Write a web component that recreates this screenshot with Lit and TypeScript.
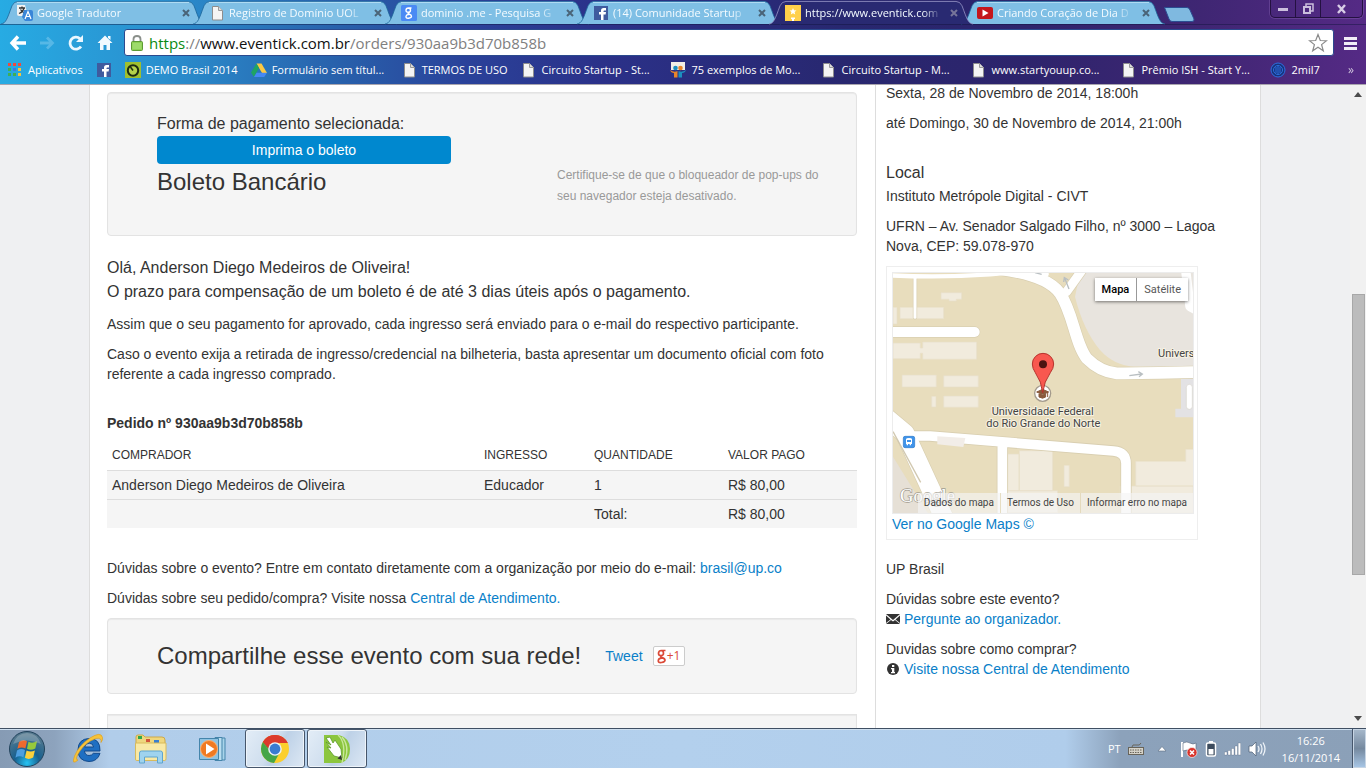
import { LitElement, html, css, svg, nothing, TemplateResult } from "lit";
import { customElement, property } from "lit/decorators.js";
import { classMap } from "lit/directives/class-map.js";

const pageIcon = svg`<path d="M3.500 1.500h6l4 4v9.500h-10z" fill="#f4f4f4" stroke="#8d8d8d"/><path d="M9.500 1.500v4h4" fill="#ddd" stroke="#9a9a9a"/>`;
const facebookIcon = svg`<rect x="1" y="1" width="14" height="14" fill="#3f5b9e"/><path d="M8 15V9.500H6V7h2V5.500Q8 3 10.500 3H13v2.400h-1.500q-1 0-1 1V7H13l-.4 2.500h-2.100V15z" fill="#fff"/>`;

const icons: Record<string, TemplateResult> = {
  page: pageIcon,
  facebook: facebookIcon,
  translate: svg`<path d="M0 0h8l3 11H2q-2 0-2-2z" fill="#f2f2f2"/><path d="M2 3h6M5 1.500V3M7 3Q6 7 2 8.500M3.500 4.500Q5 7 7.500 8" stroke="#333" stroke-width="1.300" fill="none"/><path d="M7 5h7q2 0 2 2v7q0 2-2 2H8L5 12z" fill="#3a86d8"/><path d="M8 14l3-7.500L14 14M9 11.500h4" stroke="#fff" stroke-width="1.200" fill="none"/>`,
  google: svg`<rect width="16" height="16" rx="1.500" fill="#4a8af4"/><path d="M10.500 3H7.500Q5 3 5 5.200T7.300 7.300Q9.500 7.300 9.500 5.200T7.500 3M7.300 7.500Q6.500 8.500 8 9Q10.500 9.800 10.500 11.300T7.600 13.200T5 11.400T8 9.500" fill="none" stroke="#fff" stroke-width="1.400"/>`,
  star: svg`<rect width="16" height="16" fill="#ffd04a"/><path d="M8 3l1 2.300 2.500.2-1.900 1.600.6 2.400L8 8.300 5.800 9.500l.6-2.400-1.900-1.600L7 5.300z" fill="#fff"/><path d="M6 12.500h4v1.500H9V16H7v-2H6z" fill="#fff"/>`,
  youtube: svg`<rect y="2" width="16" height="12" rx="2" fill="#c4161c"/><path d="M5.500 4.500v7l6-3.500z" fill="#fff"/>`,
  apps: svg`<g fill="#f04a3e"><path d="M1 1h3v3H1zM6 1h3v3H6zM11 1h3v3h-3z"/></g><path d="M1 6h3v3H1z" fill="#3fae55"/><path d="M6 6h3v3H6z" fill="#3b78e7"/><path d="M11 6h3v3h-3zM11 11h3v3h-3z" fill="#f7c53b"/><path d="M1 11h3v3H1zM6 11h3v3H6z" fill="#3fae55"/>`,
  demo: svg`<rect width="16" height="16" fill="#9fbf2f"/><circle cx="8" cy="8.500" r="5.200" fill="#b5d24a" stroke="#1d2b12" stroke-width="2"/><path d="M8 8.500L5.500 5" stroke="#1d2b12" stroke-width="1.500"/>`,
  drive: svg`<path d="M5.500 1.500h5L16 11h-5z" fill="#fdc942"/><path d="M5.500 1.500L8 6 3 15 0 10.500z" fill="#1fa463"/><path d="M5.500 10.700H16L13.200 15H3z" fill="#4688f4"/>`,
  slides: svg`<path d="M1 0h14v8H1z" fill="#f3eee6"/><circle cx="5.500" cy="6" r="2.300" fill="#1c8fbf"/><circle cx="10.500" cy="6" r="2.300" fill="#e8852a"/><path d="M0 8q4 3 7.500 1v6.500H4V11Q1 11 0 8z" fill="#e8852a"/><path d="M16 8q-4 3-7.500 1v6.500H12V11q3 0 4-3z" fill="#1c8fbf"/>`,
  disc: svg`<circle cx="8" cy="8" r="7" fill="#17337c" stroke="#2d6fe0"/><circle cx="8" cy="8" r="4.500" fill="none" stroke="#2d6fe0"/><path d="M6 5v6M8 4v8M10 5v6" stroke="#2d6fe0"/>`,
};

@customElement("small-icon")
export class SmallIcon extends LitElement {
  @property() name = "page";

  static styles = css`
    :host { display: block; flex: none; width: 16px; height: 16px; }
    .glyph { display: block; width: 16px; height: 16px; }
  `;

  render() {
    return html`<svg class="glyph" viewBox="0 0 16 16" aria-hidden="true">${icons[this.name]}</svg>`;
  }
}

interface Tab { icon: string; title: string; active?: boolean }
interface Bookmark { icon: string; title: string }

@customElement("browser-chrome")
export class BrowserChrome extends LitElement {
  private tabs: Tab[] = [
    { icon: "translate", title: "Google Tradutor" },
    { icon: "page", title: "Registro de Domínio UOL" },
    { icon: "google", title: "dominio .me - Pesquisa G" },
    { icon: "facebook", title: "(14) Comunidade Startup" },
    { icon: "star", title: "https://www.eventick.com", active: true },
    { icon: "youtube", title: "Criando Coração de Dia D" },
  ];

  private bookmarks: Bookmark[] = [
    { icon: "apps", title: "Aplicativos" },
    { icon: "facebook", title: "" },
    { icon: "demo", title: "DEMO Brasil 2014" },
    { icon: "drive", title: "Formulário sem títul..." },
    { icon: "page", title: "TERMOS DE USO" },
    { icon: "page", title: "Circuito Startup - St..." },
    { icon: "slides", title: "75 exemplos de Mo..." },
    { icon: "page", title: "Circuito Startup - M..." },
    { icon: "page", title: "www.startyouup.co..." },
    { icon: "page", title: "Prêmio ISH - Start Y..." },
    { icon: "disc", title: "2mil7" },
  ];

  static styles = css`
    :host {
      display: block;
      flex: none;
      border-bottom: 1px solid #a9a5ae;
      background: linear-gradient(90deg, #27abe3 0%, #2a8fce 12%, #2860ab 25%, #2a429a 34%, #2b3189 44%, #28276f 62%, #2d246c 75%, #3f2673 88%, #552a85 100%);
      color: #fff;
      font-family: "Open Sans", "Noto Sans", sans-serif;
      font-size: 12px;
      line-height: 16px;
    }
    button { padding: 0; border: 0; background: none; color: inherit; font: inherit; }
    .strip { display: flex; height: 25px; box-sizing: border-box; padding-left: 5px; border-bottom: 1px solid rgba(15, 20, 60, .45); }
    .tab { position: relative; flex: 0 1 192px; min-width: 0; display: flex; align-items: center; gap: 4px; padding: 2px 3px 0 12px; box-sizing: border-box; color: #f4fbff; }
    .tab.active { z-index: 1; }
    .shape { position: absolute; left: -5px; top: 0; width: calc(100% + 14px); height: 25px; }
    .tab small-icon, .title, .close { position: relative; }
    .title { flex: 1; min-width: 0; overflow: hidden; white-space: nowrap; font-size: 11px; mask-image: linear-gradient(90deg, #000 86%, transparent 100%); }
    .close { width: 16px; height: 16px; display: grid; place-items: center; }
    .newtab { width: 34px; height: 24px; margin-left: 6px; }
    .newtab svg { display: block; }
    .window { display: flex; align-self: flex-start; margin-left: auto; margin-right: 3px; height: 17px; border: 1px solid #241141; border-top: 0; border-radius: 0 0 5px 5px; box-shadow: 0 0 0 1px rgba(170, 130, 210, .25); }
    .window button { width: 25px; display: grid; place-items: center; border-right: 1px solid #241141; }
    .window button:last-child { width: 41px; border-right: 0; }
    .toolbar { display: flex; align-items: center; height: 33px; gap: 9px; padding: 2px 8px 0; box-sizing: border-box; }
    .nav { width: 20px; height: 20px; display: grid; place-items: center; }
    .nav svg { display: block; }
    .omni { flex: 1; display: flex; align-items: center; gap: 5px; height: 27px; box-sizing: border-box; padding: 0 5px; background: #fff; border: 1px solid #2b4a8e; border-radius: 3px; }
    .address { position: relative; flex: 1; height: 22px; }
    .url { position: absolute; inset: 0; color: #808080; font-size: 15px; line-height: 22px; white-space: nowrap; pointer-events: none; }
    .secure { color: #0a8a12; }
    .host { color: #111; }
    .field { width: 100%; height: 22px; box-sizing: border-box; padding: 0; border: 0; outline: 0; background: none; font: inherit; font-size: 15px; }
    .menu svg { display: block; }
    .marks { display: flex; align-items: center; gap: 13px; height: 26px; padding: 0 12px 2px 7px; box-sizing: border-box; }
    .mark { display: flex; align-items: center; gap: 5px; color: #fff; text-decoration: none; white-space: nowrap; font-size: 11px; }
    .mark.long { flex: 0 1 137px; }
    .more { margin-left: auto; opacity: .7; }
  `;

  private renderTab(tab: Tab) {
    return html`
      <div class=${classMap({ tab: true, active: !!tab.active })} role="tab" aria-selected=${tab.active ? "true" : "false"}>
        <svg class="shape" viewBox="0 0 206 26" preserveAspectRatio="none" aria-hidden="true">
          <path d="M1 25C6 24 7 20 12 6Q14 1.500 18 1.500H188Q192 1.500 194 6C199 20 200 24 205 25"
            fill=${tab.active ? "#292a72" : "#7fbfe5"} stroke=${tab.active ? "#9a98c8" : "#1b6398"} stroke-opacity=".8"/>
          ${tab.active ? nothing : svg`<path d="M17 2.500H189" stroke="#b6def4"/>`}
        </svg>
        <small-icon name=${tab.icon}></small-icon>
        <span class="title">${tab.title}</span>
        <button class="close" aria-label="Fechar guia">
          <svg width="8" height="8" viewBox="0 0 8 8"><path d="M1 1l6 6M7 1L1 7" stroke=${tab.active ? "#77759a" : "#4a6478"} stroke-width="2"/></svg>
        </button>
      </div>`;
  }

  render() {
    return html`
      <div class="strip" role="tablist">
        ${this.tabs.map((tab) => this.renderTab(tab))}
        <button class="newtab" aria-label="Nova guia">
          <svg width="32" height="22" viewBox="0 0 32 22"><path d="M1.500 6.500H24Q26 6.500 27 9L31 18Q31.500 20.500 29 20.500H9Q7 20.500 6 18z" fill="#7fb9e0" stroke="#2b4d92"/></svg>
        </button>
        <div class="window">
          <button aria-label="Minimizar"><svg width="12" height="10" viewBox="0 0 12 10"><rect x="1" y="4" width="10" height="3" fill="#cbbfdd"/></svg></button>
          <button aria-label="Restaurar"><svg width="12" height="12" viewBox="0 0 12 12"><path d="M4 3V1h7v7H9" fill="none" stroke="#cbbfdd" stroke-width="1.500"/><rect x="2" y="4" width="6" height="6" fill="none" stroke="#cbbfdd" stroke-width="2"/></svg></button>
          <button aria-label="Fechar"><svg width="11" height="10" viewBox="0 0 11 10"><path d="M2 1l7 8M9 1L2 9" stroke="#d8cde6" stroke-width="2.400"/></svg></button>
        </div>
      </div>
      <div class="toolbar">
        <button class="nav" aria-label="Voltar"><svg width="18" height="16" viewBox="0 0 18 16"><path d="M9 1.500L3 8l6 6.500M3.500 8H17" fill="none" stroke="#fff" stroke-width="3.400"/></svg></button>
        <button class="nav" aria-label="Avançar"><svg width="18" height="16" viewBox="0 0 18 16"><path d="M9 2.500L14.500 8 9 13.500M14 8H2" fill="none" stroke="#69c0ea" stroke-width="2.800" opacity=".7"/></svg></button>
        <button class="nav" aria-label="Recarregar"><svg width="18" height="18" viewBox="0 0 18 18"><path d="M14 12.500A6 6 0 1 1 13 4.700" fill="none" stroke="#eaf7ff" stroke-width="2.800"/><path d="M16 1v7H9z" fill="#eaf7ff"/></svg></button>
        <button class="nav" aria-label="Página inicial"><svg width="18" height="18" viewBox="0 0 18 18"><path d="M9 1.500L16.500 9H14v7h-3.500v-5h-3v5H4V9H1.500z" fill="#f2faff"/><path d="M12 2h2.500v4L12 4z" fill="#f2faff"/></svg></button>
        <div class="omni">
          <svg width="14" height="18" viewBox="0 0 14 18" aria-hidden="true"><path d="M3.500 8V5q0-3 3.500-3t3.500 3v3" fill="none" stroke="#8a8f8a" stroke-width="1.800"/><rect x="1.500" y="7.500" width="11" height="9" rx="1" fill="#8bcf52" stroke="#5d9a35"/><path d="M2.500 10h9M2.500 12h9M2.500 14h9" stroke="#b0e583"/></svg>
          <div class="address">
            <span class="url"><span class="secure">https</span>://<span class="host">www.eventick.com.br</span>/orders/930aa9b3d70b858b</span>
            <input class="field" aria-label="Endereço" />
          </div>
          <svg width="20" height="20" viewBox="0 0 20 20" aria-hidden="true"><path d="M10 1.500l2.300 6 6.200.2-4.900 3.900 1.700 6.200L10 14.200l-5.300 3.600 1.700-6.200L1.500 7.700l6.200-.2z" fill="#fff" stroke="#8a8a8a" stroke-width="1.200"/></svg>
        </div>
        <button class="menu" aria-label="Menu"><svg width="15" height="16" viewBox="0 0 15 16"><path d="M1 3.500h13M1 8.500h13M1 13.500h13" stroke="#f1edf7" stroke-width="3.200"/></svg></button>
      </div>
      <nav class="marks">
        ${this.bookmarks.map((mark) => html`<a class=${classMap({ mark: true, long: mark.title.endsWith("...") })} href="#" aria-label=${mark.title || "Facebook"}><small-icon name=${mark.icon}></small-icon>${mark.title ? html`<span>${mark.title}</span>` : nothing}</a>`)}
        <button class="more" aria-label="Mais favoritos">»</button>
      </nav>`;
  }
}

@customElement("event-map")
export class EventMap extends LitElement {
  static styles = css`
    :host { display: block; position: relative; border: 1px solid #ececec; overflow: hidden; font-family: Roboto, sans-serif; }
    .canvas { display: block; width: 100%; }
    .types { position: absolute; top: 5px; right: 5px; display: flex; background: #fff; box-shadow: 0 1px 3px rgba(0, 0, 0, .5); }
    .types button { height: 23px; padding: 0 7px; border: 0; background: #fff; color: #565656; font: 11px/23px Roboto, sans-serif; }
    .types .on { border-right: 1px solid #999; color: #000; font-weight: 500; }
    .legal { position: absolute; right: 0; bottom: 0; display: flex; height: 20px; background: rgba(245, 245, 245, .65); }
    .legal a { padding: 0 6px; border-left: 1px solid rgba(225, 214, 180, .8); color: #444; font-size: 10px; line-height: 20px; text-decoration: none; white-space: nowrap; }
    .legal a:first-child { border-left: 0; }
    .place { fill: #444; stroke: #f7f2e2; stroke-width: 6px; paint-order: stroke; font: 33px Roboto, sans-serif; }
    .brand { fill: #fff; stroke: #a29d90; stroke-width: 4px; paint-order: stroke; font: 56px "Liberation Serif", serif; }
  `;

  render() {
    return html`
      <svg class="canvas" viewBox="39 39 900 720" role="img" aria-label="Mapa do local">
        <rect x="39" y="39" width="900" height="720" fill="#e8ddbd"/>
        <path d="M600 39H939V320H760Q700 315 660 270Q610 210 585 110z" fill="#e8e4de"/>
        <g fill="#f1ebdd" stroke="#e9e0c8" stroke-width="2">
          <path d="M183 98h62v20h-16v5h-22v-5h-24zM60 142h131v34H60zM39 142h12v50H39zM39 249h82v15h7v-18h162v52H128v-18h-7v16H39zM66 345h103v36H66zM191 347h104v34H191zM155 409h13v32h-13zM191 408h104v34H191zM418 572h100v120H418zM383 582h34v110h-34zM552 616h16v64h-16zM767 604h150v-36h24v110H767zM720 678h220v81H720zM383 692h150v66H383z"/>
        </g>
        <path d="M903 352h38v120h-55v-26h17z" fill="#e3e2e4"/>
        <rect x="919" y="373" width="18" height="75" rx="9" fill="#fff" stroke="#d8d4cc" stroke-width="2"/>
        <path d="M39 590L150 770H39z" fill="#e6e0d6"/>
        <g fill="none" stroke="#d9cfb1" stroke-linecap="round" stroke-linejoin="round">
          <path d="M20 216H284" stroke-width="34"/>
          <path d="M105 55V172" stroke-width="13"/>
          <path d="M100 528H150L320 542L700 573Q738 576 738 610V780M367 550V780" stroke-width="34"/>
          <path d="M15 470L75 520L195 780" stroke-width="60"/>
          <path d="M360 28Q500 45 540 100C580 160 585 250 620 295Q660 335 710 340Q800 340 960 336" stroke-width="39"/>
          <path d="M560 95L610 25" stroke-width="31"/>
        </g>
        <g fill="none" stroke="#fff" stroke-linecap="round" stroke-linejoin="round">
          <path d="M20 216H284" stroke-width="30"/>
          <path d="M105 55V172" stroke-width="9"/>
          <path d="M100 528H150L320 542L700 573Q738 576 738 610V780M367 550V780" stroke-width="29"/>
          <path d="M15 470L75 520L195 780" stroke-width="56"/>
          <path d="M360 28Q500 45 540 100C580 160 585 250 620 295Q660 335 710 340Q800 340 960 336" stroke-width="35"/>
          <path d="M560 95L610 25" stroke-width="27"/>
          <path d="M30 46Q180 54 330 43Q420 33 500 43" stroke-width="13"/>
          <path d="M917 30L930 140L950 150" stroke-width="28"/>
        </g>
        <path d="M39 515L122 667" stroke="#d1c8b0" stroke-width="4"/>
        <path d="M172 529L256 534L250 561L172 553z" fill="#f2ede8"/>
        <g fill="none" stroke="#b9bfc2" stroke-width="4">
          <path d="M748 347L785 342M775 335l12 7-10 8" /><path d="M567 87L554 54M551 66l2-13 12 7"/><path d="M465 38l20 5"/>
        </g>
        <rect x="70" y="529" width="34" height="34" rx="5" fill="#3f93ea" stroke="#2b78c8" stroke-width="2"/>
        <path d="M78 552V538q0-4 9-4t9 4v14h-3v4h-4v-4h-5v4h-4v-4z" fill="#fff"/><path d="M81 540h12v6H81z" fill="#3f93ea"/>
        <circle cx="488" cy="400" r="24" fill="#fff" stroke="#a39a8c" stroke-width="4"/>
        <path d="M470 396l18-8 18 8-18 8zM477 402v9q11 7 20 0v-9M503 397v14" fill="#8a5a3c" stroke="#8a5a3c" stroke-width="3"/>
        <path d="M488 398Q485 365 466 338Q457 325 457 312A32 32 0 0 1 521 312Q521 325 511 338Q492 365 488 398z" fill="#f8584f" stroke="#b7322c" stroke-width="3"/>
        <circle cx="489" cy="313" r="12" fill="#4d1411"/>
        <text class="place" x="488" y="465" text-anchor="middle">Universidade Federal</text>
        <text class="place" x="490" y="501" text-anchor="middle">do Rio Grande do Norte</text>
        <text class="place" x="834" y="291">Univers</text>
        <text class="brand" x="60" y="727">Google</text>
      </svg>
      <div class="types"><button class="on">Mapa</button><button>Satélite</button></div>
      <div class="legal"><a href="#">Dados do mapa</a><a href="#">Termos de Uso</a><a href="#">Informar erro no mapa</a></div>`;
  }
}

@customElement("order-page")
export class OrderPage extends LitElement {
  static styles = css`
    :host { display: flex; flex: 1; min-height: 0; overflow: hidden; background: #eff0f2; color: #333; font: 14px/20px "Liberation Sans", Arial, sans-serif; }
    .viewport { flex: 1; min-width: 0; overflow: hidden; display: flex; justify-content: center; align-items: flex-start; }
    .sheet { display: flex; width: 100%; max-width: 1172px; box-sizing: border-box; min-height: 100%; margin-top: -2px; background: #fff; border: solid #ddd; border-width: 0 1px; }
    .main { flex: 1; min-width: 0; padding: 9px 18px 0 17px; }
    .side { flex: 0 0 385px; box-sizing: border-box; padding: 0 37px 60px 10px; border-left: 1px solid #ddd; }
    p { margin: 0 0 10px; }
    a { color: #0a7fc9; text-decoration: none; }
    .well { box-sizing: border-box; padding: 19px 30px 19px 49px; background: #f5f5f5; border: 1px solid #e3e3e3; border-radius: 4px; box-shadow: inset 0 1px 1px rgba(0, 0, 0, .05); }
    .pay { display: grid; grid-template-columns: 294px minmax(0, 270px); column-gap: 106px; min-height: 144px; margin-bottom: 20px; }
    .lead { margin: 0; font-size: 16px; line-height: 24px; font-weight: 400; }
    .print { display: block; width: 100%; height: 28px; padding: 0; border: 0; border-radius: 4px; background: #0088cf; color: #fff; font: 14px/28px "Liberation Sans", Arial, sans-serif; }
    .big { margin: 0; font-size: 24px; line-height: 36px; font-weight: 400; }
    .hint { align-self: start; margin: 53px 0 0; color: #999; font-size: 12px; line-height: 21px; }
    .greet { margin-bottom: 10px; }
    .order { margin: 29px 0 8px; font-size: 14px; line-height: 20px; font-weight: 700; }
    table { width: 100%; margin-bottom: 30px; border-collapse: collapse; table-layout: fixed; }
    th, td { box-sizing: border-box; padding: 4px 5px; text-align: left; font-weight: 400; }
    th { padding-bottom: 5px; font-size: 12px; text-transform: uppercase; }
    td { border-top: 1px solid #ddd; background: #f5f5f5; }
    .buyer { width: 372px; }
    .kind { width: 110px; }
    .share { display: flex; align-items: center; gap: 10px; height: 76px; margin-bottom: 20px; }
    .share .big { margin-right: 14px; }
    .plus { width: 32px; height: 20px; padding: 0; display: flex; align-items: center; justify-content: center; border: 1px solid #ccc; border-radius: 2px; background: #fff; color: #db4a37; font: 12px/18px "Open Sans", sans-serif; }
    .plus svg { display: block; }
    .next { height: 80px; border-radius: 0; }
    .local { margin: 30px 0 3px; font-size: 16px; line-height: 20px; font-weight: 400; }
    .mapbox { width: 312px; height: 274px; box-sizing: border-box; margin-bottom: 19px; padding: 5px 3px 5px 5px; border: 1px solid #eee; }
    .mark { display: inline-block; width: 14px; height: 14px; margin-right: 4px; vertical-align: -2px; }
    .bar { flex: 0 0 16px; display: flex; flex-direction: column; align-items: center; gap: 6px; padding: 7px 0; box-sizing: border-box; background: #f1f1f1; }
    .bar svg { flex: none; display: block; }
    .track { flex: 1; width: 13px; display: flex; flex-direction: column; }
    .before { flex: 192; }
    .thumb { flex: 281; box-sizing: border-box; border: 1px solid #a8a8a8; background: #bcbcbc; }
    .after { flex: 136; }
  `;

  render() {
    return html`
      <div class="viewport">
        <div class="sheet">
          <main class="main">
            <section class="well pay">
              <div>
                <p class="lead">Forma de pagamento selecionada:</p>
                <button class="print">Imprima o boleto</button>
                <h3 class="big">Boleto Bancário</h3>
              </div>
              <p class="hint">Certifique-se de que o bloqueador de pop-ups do seu navegador esteja desativado.</p>
            </section>
            <div class="greet">
              <p class="lead">Olá, Anderson Diego Medeiros de Oliveira!</p>
              <p class="lead">O prazo para compensação de um boleto é de até 3 dias úteis após o pagamento.</p>
            </div>
            <p>Assim que o seu pagamento for aprovado, cada ingresso será enviado para o e-mail do respectivo participante.</p>
            <p>Caso o evento exija a retirada de ingresso/credencial na bilheteria, basta apresentar um documento oficial com foto referente a cada ingresso comprado.</p>
            <h4 class="order">Pedido nº 930aa9b3d70b858b</h4>
            <table>
              <thead><tr><th class="buyer">Comprador</th><th class="kind">Ingresso</th><th>Quantidade</th><th>Valor pago</th></tr></thead>
              <tbody>
                <tr><td>Anderson Diego Medeiros de Oliveira</td><td>Educador</td><td>1</td><td>R$ 80,00</td></tr>
                <tr><td></td><td></td><td>Total:</td><td>R$ 80,00</td></tr>
              </tbody>
            </table>
            <p>Dúvidas sobre o evento? Entre em contato diretamente com a organização por meio do e-mail: <a href="#">brasil@up.co</a></p>
            <p>Dúvidas sobre seu pedido/compra? Visite nossa <a href="#">Central de Atendimento.</a></p>
            <section class="well share">
              <h3 class="big">Compartilhe esse evento com sua rede!</h3>
              <a href="#">Tweet</a>
              <button class="plus" aria-label="Google +1">
                <svg width="10" height="15" viewBox="0 0 10 15" aria-hidden="true"><path d="M8.500 1.500H4.500Q1.500 1.800 1.500 4.200T4 6.600Q6.500 6.600 6.500 4.200T4.300 1.500M4 6.800Q3.200 7.800 4.600 8.400Q8 9.600 8 11.300T4.500 13.500T1.300 11.500T5 9.200" fill="none" stroke="#db4a37" stroke-width="1.700"/></svg>+1
              </button>
            </section>
            <section class="well next"></section>
          </main>
          <aside class="side">
            <p>Sexta, 28 de Novembro de 2014, 18:00h</p>
            <p>até Domingo, 30 de Novembro de 2014, 21:00h</p>
            <h4 class="local">Local</h4>
            <p>Instituto Metrópole Digital - CIVT</p>
            <p>UFRN – Av. Senador Salgado Filho, nº 3000 – Lagoa Nova, CEP: 59.078-970</p>
            <div class="mapbox">
              <event-map></event-map>
              <a href="#">Ver no Google Maps ©</a>
            </div>
            <p>UP Brasil</p>
            <p>Dúvidas sobre este evento?<br />
              <svg class="mark" viewBox="0 0 14 14" aria-hidden="true"><path d="M0 2h14L7 8zM0 3.500L4.500 7.500 0 11zM14 3.500L9.500 7.500 14 11zM0 12l5-4 2 1.500L9 8l5 4z" fill="#333"/></svg><a href="#">Pergunte ao organizador.</a></p>
            <p>Duvidas sobre como comprar?<br />
              <svg class="mark" viewBox="0 0 14 14" aria-hidden="true"><circle cx="7" cy="7" r="6" fill="#333"/><path d="M6 3h2.300v2H6zM5 6h3.300v4H9v1.200H5V10h1V7.200H5z" fill="#fff"/></svg><a href="#">Visite nossa Central de Atendimento</a></p>
          </aside>
        </div>
      </div>
      <div class="bar" aria-hidden="true">
        <svg width="8" height="5" viewBox="0 0 8 5"><path d="M4 0L8 5H0z" fill="#4c4c4c"/></svg>
        <div class="track"><div class="before"></div><div class="thumb"></div><div class="after"></div></div>
        <svg width="8" height="5" viewBox="0 0 8 5"><path d="M4 5L8 0H0z" fill="#4c4c4c"/></svg>
      </div>`;
  }
}

@customElement("task-bar")
export class TaskBar extends LitElement {
  static styles = css`
    :host { display: flex; flex: none; height: 40px; box-sizing: border-box; border-top: 1px solid #3f4f63; box-shadow: inset 0 1px 0 #cfe0f0; background: linear-gradient(90deg, #869bb4 0%, #8da3bd 4%, #b1cdea 8%, #b3d0ed 50%, #b0cdeb 78%, #8ca2bb 82%, #8ba0b8 100%); color: #fff; font: 12px/17px "Open Sans", sans-serif; }
    button { padding: 0; border: 0; background: none; color: inherit; font: inherit; }
    .apps { display: flex; align-items: center; }
    .app { width: 60px; height: 39px; margin-right: 2px; display: grid; place-items: center; box-sizing: border-box; }
    .start { width: 54px; height: 39px; display: grid; place-items: center; margin-right: 5px; }
    .app svg, .start svg { display: block; }
    .app.open { border: 1px solid #46566b; border-radius: 3px; background: linear-gradient(120deg, #e3edf7, #cfdeee 45%, #bdd1e7 55%, #dde8f4); box-shadow: inset 0 0 0 1px #eef4fa; }
    .tray { display: flex; align-items: center; gap: 7px; margin-left: auto; }
    .tray svg { display: block; }
    .lang { font-size: 11px; }
    .clock { margin: 0 5px 0 9px; text-align: center; font-size: 11px; }
    .desk { align-self: stretch; width: 14px; box-sizing: border-box; border: 1px solid #46566b; border-width: 0 0 0 1px; box-shadow: inset 0 0 0 1px #c7d5e4; background: linear-gradient(#a7b9cc, #75899f 50%, #a9c8e8); }
  `;

  render() {
    return html`
      <div class="apps">
        <button class="start" aria-label="Iniciar">
          <svg width="38" height="38" viewBox="0 0 38 38">
            <defs><radialGradient id="orb" cx=".5" cy=".9" r=".8"><stop offset="0" stop-color="#25c3f3"/><stop offset=".45" stop-color="#17608f"/><stop offset="1" stop-color="#53788e"/></radialGradient></defs>
            <circle cx="19" cy="19" r="17.500" fill="url(#orb)" stroke="#22435c"/>
            <path d="M11 12q4-3 8-.8l-1.600 7.200q-4-2-8 .4z" fill="#ee6a2e"/><path d="M20.500 11.800q4 2 8.500-.6l-1.700 7.300q-4.400 2.200-8.300.3z" fill="#96c93c"/>
            <path d="M9 20.500q4-2.500 8-.5l-1.600 7.200q-4-2-8 .5z" fill="#4d9fe0"/><path d="M18.600 20.500q4 2.100 8.300 0l-1.700 7q-4.500 2.600-8.300.3z" fill="#fbd03c"/>
            <path d="M5 14Q9 3 19 3t14 11Q19 7 5 14z" fill="#fff" opacity=".22"/>
          </svg>
        </button>
        <button class="app" aria-label="Internet Explorer">
          <svg width="34" height="32" viewBox="0 0 34 32"><path d="M28 18H12.500q.4 4.500 4.600 4.500 3 0 4.200-2.200H28Q25.500 28.500 17 28.500 6 28 6 17T17 5.500Q28.500 5.500 28 18zM12.600 14h9q-.5-3.800-4.400-3.800T12.600 14z" fill="#1f6fc2" stroke="#124a8c"/><path d="M6 27Q-1 33 2.500 23 7 12 18 5T30.500 4.500Q31 7 29 9.500 30 4.500 24 5.500 14 9 8 18T6 27z" fill="#f7c33a" stroke="#d99a1c" stroke-width=".6"/></svg>
        </button>
        <button class="app" aria-label="Windows Explorer">
          <svg width="34" height="32" viewBox="0 0 34 32"><path d="M2 4q0-2 2-2h5l2 2h17q3 0 3 3v19q0 1-1 1H2z" fill="#efd77e" stroke="#cda94a"/><path d="M4 3h4v3H4z" fill="#2fa84d"/><path d="M12 6h4v3h-4z" fill="#d2553a"/><path d="M20 7h5v3h-5z" fill="#3a7fd0"/><path d="M1.500 10H32v16q0 1.500-1.500 1.500H2.500q-1 0-1-1.500z" fill="#f9e9a5" stroke="#d8bb5c"/><path d="M5.500 30V20q0-2 2-2h19q2 0 2 2v10h-5v-6h-13v6z" fill="#9fd3ee" stroke="#5fa5cf"/></svg>
        </button>
        <button class="app" aria-label="Windows Media Player">
          <svg width="32" height="28" viewBox="0 0 32 28"><path d="M22 3h6v22h-6z" fill="#a8d4ea" stroke="#4585ab"/><path d="M18 2.500h7v23h-7z" fill="#b9def0" stroke="#4585ab"/><path d="M2.500 3.500h19v21h-19z" fill="#8fc3e2" stroke="#4585ab"/><circle cx="12" cy="14" r="8.500" fill="#f07a22" stroke="#fbb171"/><path d="M9 8.500v11l8.500-5.500z" fill="#fff"/></svg>
        </button>
        <button class="app open" aria-label="Google Chrome">
          <svg width="30" height="30" viewBox="0 0 30 30"><circle cx="15" cy="15" r="14" fill="#fbcf2d"/><path d="M15 15L2.900 8A14 14 0 0 1 27.700 9H15z" fill="#dc3a2c"/><path d="M2.900 8A14 14 0 0 0 14 29l6-11-5-3-5 3z" fill="#45a647"/><path d="M2.900 8L9.500 18 15 9z" fill="#45a647"/><path d="M2.900 8Q7 1 15 1T27.700 9H15q-5 0-6.500 5.500z" fill="#dc3a2c"/><circle cx="15" cy="15" r="6.800" fill="#eef2f6"/><circle cx="15" cy="15" r="5.400" fill="#3a7bd0"/></svg>
        </button>
        <button class="app open" aria-label="CorelDRAW">
          <svg width="32" height="32" viewBox="0 0 32 32"><path d="M3 2h15q11 3 11 14T20 30H3z" fill="#8cc63e"/><path d="M17 2q9 8 4 28M21 4q8 9 3 23" fill="none" stroke="#c9e79c" stroke-width="1.300"/><path d="M5 5l4-1 3 6 2-3 6 9 1 9-8-2-7-9 4 1-5-6 5 3z" fill="#fff" stroke="#5d9a2a" stroke-width=".8"/><path d="M21 27l-4.500-1.500L20 22z" fill="#333"/></svg>
        </button>
      </div>
      <div class="tray">
        <span class="lang">PT</span>
        <svg width="16" height="14" viewBox="0 0 16 14"><rect x=".5" y="5.500" width="15" height="7" fill="#d5d2c8" stroke="#68645a"/><path d="M2 8h12M2 10.500h12" stroke="#68645a" stroke-dasharray="1.500 1"/><path d="M4 5Q4 2 8 3t5-2" fill="none" stroke="#68645a"/></svg>
        <svg width="22" height="10" viewBox="0 0 22 10"><path d="M11 2.500l4 4.500H7z" fill="#fff" stroke="#5a6b7f" stroke-width=".6"/></svg>
        <svg width="18" height="18" viewBox="0 0 18 18"><path d="M2 2v15" stroke="#fff" stroke-width="2"/><path d="M3 3q4-2 7 0t6 0v8q-4 2-6 0t-7 0z" fill="#fff" stroke="#55657a" stroke-width=".6"/><circle cx="12" cy="12.500" r="5" fill="#d9342b" stroke="#fff" stroke-width=".6"/><path d="M10 10.500l4 4M14 10.500l-4 4" stroke="#fff" stroke-width="1.600"/></svg>
        <svg width="12" height="18" viewBox="0 0 12 18"><rect x="1.500" y="3" width="9" height="13" rx="1.500" fill="#3d4c5e" stroke="#fff" stroke-width="1.500"/><path d="M4 1h4v2H4zM3.500 9h5v5.500h-5z" fill="#fff"/></svg>
        <svg width="17" height="14" viewBox="0 0 17 14"><path d="M.5 13v-3H3v3zM4 13V8.500h2.500V13zM7.500 13V6.500H10V13zM11 13V4h2.500v9zM14.200 13V1h2.500v12z" fill="#fff" stroke="#4c5d72" stroke-width=".3"/></svg>
        <svg width="18" height="18" viewBox="0 0 18 18"><path d="M1 6h3l4-4v14l-4-4H1z" fill="#fff" stroke="#4c5d72" stroke-width=".7"/><path d="M10 6q2 3 0 6M12.500 4q3 5 0 10M15 2.500q4 6.500 0 13" fill="none" stroke="#eef3f8" stroke-width="1.300"/></svg>
        <div class="clock">16:26<br />16/11/2014</div>
        <button class="desk" aria-label="Mostrar área de trabalho"></button>
      </div>`;
  }
}

@customElement("app-root")
export class AppRoot extends LitElement {
  static styles = css`
    :host { display: flex; flex-direction: column; height: 100vh; overflow: hidden; }
  `;

  render() {
    return html`<browser-chrome></browser-chrome><order-page></order-page><task-bar></task-bar>`;
  }
}
